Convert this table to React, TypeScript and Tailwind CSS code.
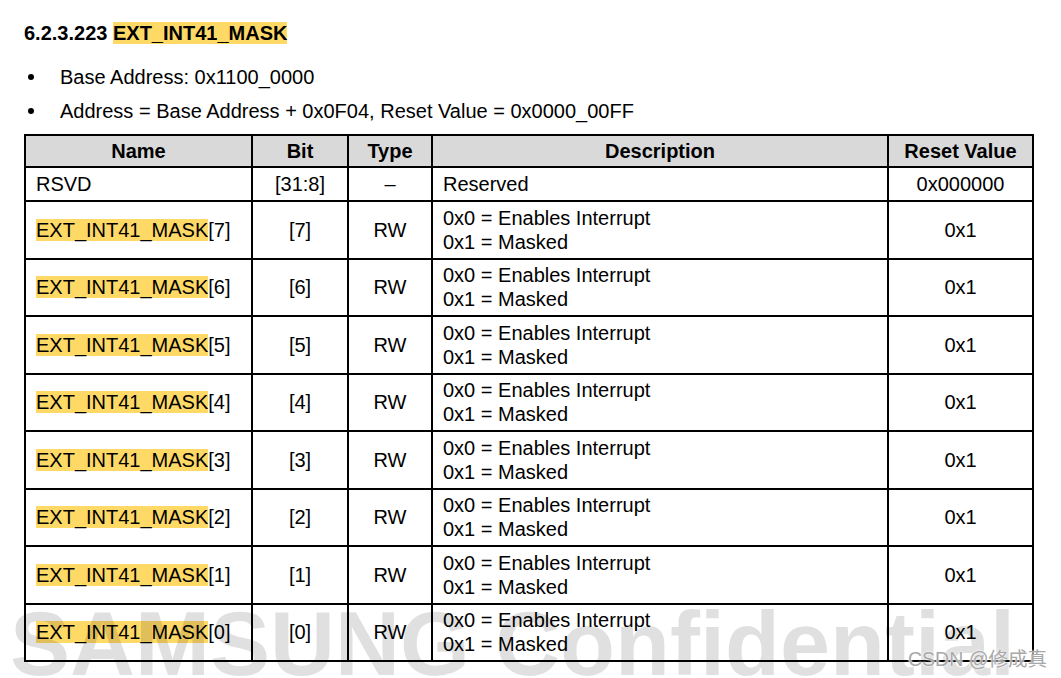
import React from "react";

const rows = [7, 6, 5, 4, 3, 2, 1, 0];

export default function App() {
  return (
    <div className="relative w-[1061px] h-[678px] overflow-hidden bg-white text-black font-['Liberation_Sans',Arial,sans-serif]">
      <div className="pl-[24px] pt-[22px]">
        <h1 className="text-[20px] font-bold leading-[22px]">
          6.2.3.223 <span className="bg-[#ffd966]">EXT_INT41_MASK</span>
        </h1>
        <ul className="mt-[16px] text-[20px] leading-[34px]">
          <li className="flex items-center">
            <span className="w-[36px] flex items-center">
              <span className="ml-[4px] w-[6px] h-[6px] rounded-full bg-black" />
            </span>
            <span>Base Address: 0x1100_0000</span>
          </li>
          <li className="flex items-center">
            <span className="w-[36px] flex items-center">
              <span className="ml-[4px] w-[6px] h-[6px] rounded-full bg-black" />
            </span>
            <span>Address = Base Address + 0x0F04, Reset Value = 0x0000_00FF</span>
          </li>
        </ul>
        <table className="mt-[6px] w-[1008px] table-fixed border-collapse border-2 border-black text-[20px]">
          <colgroup>
            <col className="w-[227px]" />
            <col className="w-[96px]" />
            <col className="w-[84px]" />
            <col className="w-[456px]" />
            <col className="w-[145px]" />
          </colgroup>
          <thead>
            <tr className="h-[32px] bg-[#d9d9d9] font-bold leading-[22px]">
              <th className="border-2 border-black p-0 text-center">Name</th>
              <th className="border-2 border-black p-0 text-center">Bit</th>
              <th className="border-2 border-black p-0 text-center">Type</th>
              <th className="border-2 border-black p-0 text-center">Description</th>
              <th className="border-2 border-black p-0 text-center">Reset Value</th>
            </tr>
          </thead>
          <tbody className="leading-[24px]">
            <tr className="h-[34px]">
              <td className="border-2 border-black pl-[10px] py-0">RSVD</td>
              <td className="border-2 border-black p-0 text-center">[31:8]</td>
              <td className="border-2 border-black p-0 text-center">–</td>
              <td className="border-2 border-black pl-[10px] py-0">Reserved</td>
              <td className="border-2 border-black p-0 text-center">0x000000</td>
            </tr>
            {rows.map((n) => (
              <tr key={n} className="h-[57.5px]">
                <td className="border-2 border-black pl-[10px] py-0">
                  <span className="bg-[#ffd966]">EXT_INT41_MASK</span>[{n}]
                </td>
                <td className="border-2 border-black p-0 text-center">[{n}]</td>
                <td className="border-2 border-black p-0 text-center">RW</td>
                <td className="border-2 border-black pl-[10px] py-0">
                  <div>0x0 = Enables Interrupt</div>
                  <div>0x1 = Masked</div>
                </td>
                <td className="border-2 border-black p-0 text-center">0x1</td>
              </tr>
            ))}
          </tbody>
        </table>
      </div>
      <div className="pointer-events-none absolute left-[10px] top-[599px] whitespace-nowrap text-[90px] font-bold leading-[1] text-[rgba(0,0,0,0.12)]">
        SAMSUNG Confidential
      </div>
      <div className="pointer-events-none absolute left-[908px] top-[648px] whitespace-nowrap text-[19.5px] leading-[22px] text-[#a8a8a8] font-['Liberation_Sans','Noto_Sans_CJK_SC',sans-serif] [text-shadow:0_0_2px_#fff,0_0_2px_#fff]">
        CSDN @修成真
      </div>
    </div>
  );
}
